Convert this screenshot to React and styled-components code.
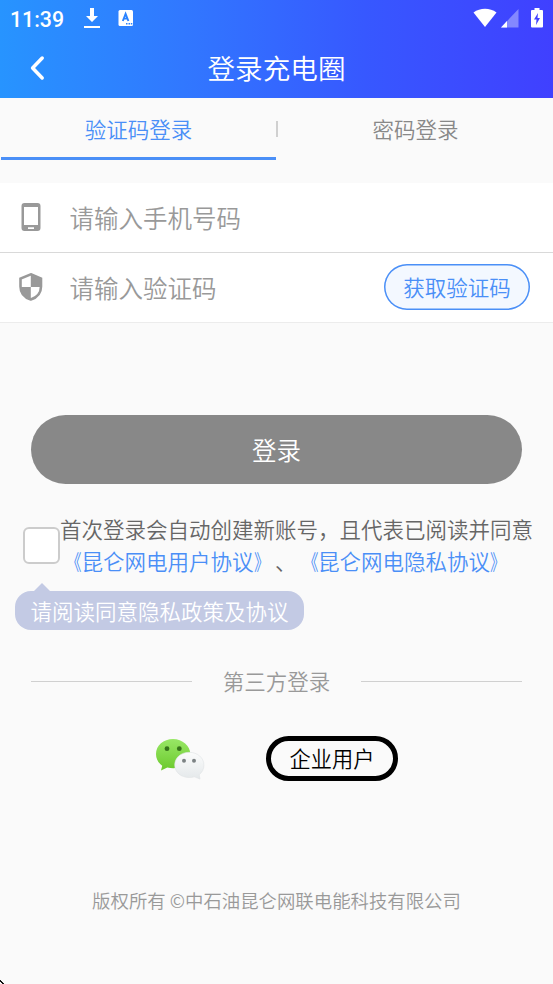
import React from "react";
import styled, { createGlobalStyle } from "styled-components";

const Global = createGlobalStyle`
  * { box-sizing: border-box; }
  html, body { margin: 0; background: #fafafa; }
  body { font-family: "Noto Sans CJK SC", sans-serif; font-size: 21.5px; font-weight: 350; color: #666; overflow: hidden; text-spacing-trim: space-all; }
  button, input { font-family: inherit; font-weight: inherit; }
`;

const Screen = styled.div`
  width: 553px;
  height: 984px;
  display: flex;
  flex-direction: column;
  background: #fafafa;
  white-space: nowrap;
`;

const Header = styled.header`
  height: 98px;
  flex: none;
  background: linear-gradient(90deg, #2794ff 0%, #3178ff 33%, #3758ff 66%, #4040ff 100%);
  color: #fff;
`;

const StatusBar = styled.div`
  height: 37px;
  display: flex;
  align-items: center;
  padding: 0 9px 1px 10px;
`;

const Clock = styled.span`
  width: 73px;
  padding-top: 3px;
  font: 500 21.3px/24px Roboto, sans-serif;
`;

const StatusIcon = styled.svg`
  display: block;
  flex: none;
  margin-left: ${(p) => p.$gap || 0}px;
`;

const StatusRight = styled.div`
  display: flex;
  margin-left: auto;
`;

const TitleBar = styled.div`
  height: 61px;
  display: grid;
  grid-template-columns: 76px 1fr 76px;
  align-items: center;
`;

const BackButton = styled.button`
  display: flex;
  padding: 0 0 0 29px;
  border: 0;
  background: none;
`;

const Title = styled.h1`
  margin: 0;
  padding-bottom: 2px;
  font-size: 27.6px;
  line-height: 40px;
  font-weight: 350;
  text-align: center;
`;

const Tabs = styled.nav`
  height: 62px;
  flex: none;
  display: flex;
`;

const Tab = styled.button`
  flex: 1;
  padding: 1px 0 0;
  border: 0;
  border-bottom: 3px solid ${(p) => (p.$active ? "#4a8ff7" : "transparent")};
  background: none;
  color: ${(p) => (p.$active ? "#4a8ff7" : "#888")};
  font-size: 21.5px;
  margin-left: ${(p) => (p.$active ? 1 : 0)}px;
`;

const TabDivider = styled.span`
  width: 2px;
  height: 16px;
  margin-top: 23px;
  background: #d0d0d0;
`;

const Form = styled.section`
  margin-top: 23px;
  background: #fff;
  border-bottom: 1px solid #ececec;
`;

const Field = styled.label`
  height: ${(p) => p.$height}px;
  display: flex;
  align-items: center;
  padding: 0 23px 1px 18px;
  border-bottom: ${(p) => (p.$line ? "1px solid #d9d9d9" : "0")};
`;

const FieldIcon = styled.svg`
  width: 26px;
  height: 30px;
  flex: none;
`;

const Input = styled.input`
  flex: 1;
  min-width: 0;
  height: 40px;
  margin-left: 25.5px;
  padding: 0;
  border: 0;
  outline: 0;
  background: none;
  font-size: 24.5px;
  &::placeholder { color: #999; opacity: 1; }
`;

const CodeButton = styled.button`
  width: 146px;
  height: 46px;
  padding: 0;
  border: 0;
  border-radius: 23px;
  box-shadow: inset 0 0 0 1.5px #4a8ff7;
  background: #f3f8ff;
  color: #4a8ff7;
  font-size: 21.5px;
  line-height: 44px;
`;

const LoginButton = styled.button`
  height: 69px;
  flex: none;
  margin: 92px 31px 0;
  padding: 0;
  border: 0;
  border-radius: 35px;
  background: #888;
  color: #fff;
  font-size: 24.5px;
`;

const Agreement = styled.div`
  display: flex;
  margin: 29px 0 0 23px;
`;

const Checkbox = styled.span`
  width: 37px;
  height: 37px;
  flex: none;
  margin-top: 14px;
  border: 2px solid #ccc;
  border-radius: 6px;
  background: #fff;
`;

const AgreementText = styled.p`
  margin: 0;
  line-height: 32px;
`;

const Link = styled.a`
  color: #4a8ff7;
`;

const Bracket = styled.span`
  display: inline-block;
  transform: scaleX(0.72);
  transform-origin: ${(p) => (p.$open ? "right" : "left")} center;
`;

const Hint = styled.div`
  align-self: flex-start;
  display: flex;
  flex-direction: column;
  margin: 6px 0 0 15px;
`;

const HintArrow = styled.span`
  width: 0;
  height: 0;
  margin-left: 19px;
  border: solid transparent;
  border-width: 0 8px 8px;
  border-bottom-color: #c3cae4;
`;

const HintBody = styled.div`
  width: 289px;
  height: 39px;
  border-radius: 16px;
  background: #c3cae4;
  color: #fff;
  line-height: 39px;
  text-align: center;
`;

const ThirdParty = styled.div`
  display: flex;
  align-items: center;
  gap: 31px;
  height: 32px;
  margin: 35px 31px 0;
  color: #999;
  line-height: 30px;
`;

const Rule = styled.span`
  flex: 1;
  height: 1px;
  background: #d0d0d0;
`;

const Providers = styled.div`
  display: flex;
  align-items: center;
  gap: 61px;
  height: 46px;
  margin: 38px 0 0 153px;
`;

const EnterpriseButton = styled.button`
  width: 132px;
  height: 45px;
  padding: 0;
  border: 5px solid #000;
  border-radius: 23px;
  background: #fafafa;
  color: #000;
  font-size: 21.2px;
  line-height: 34px;
`;

const Copyright = styled.footer`
  margin-top: 105px;
  color: #999;
  font-size: 18.4px;
  line-height: 28px;
  text-align: center;
`;

const CornerMark = styled.svg`
  display: block;
  margin-top: auto;
`;

function WeChat() {
  return (
    <svg width="52" height="44" viewBox="0 0 52 44">
      <defs>
        <linearGradient id="green" x2="0" y2="1">
          <stop stopColor="#98e766" />
          <stop offset="1" stopColor="#6bc92c" />
        </linearGradient>
        <linearGradient id="silver" x2="0" y2="1">
          <stop stopColor="#fbfcfc" />
          <stop offset="1" stopColor="#e4e8ea" />
        </linearGradient>
      </defs>
      <path d="M20 3C10.500 3 3 9.500 3 18c0 5 2.500 9 6.200 11.800L8 34.400l6.300-3c2 .5 3.900.8 6 .8C30 32.200 37.300 26 37.300 18S29.500 3 20 3z" fill="url(#green)" />
      <path d="M36.200 16.300C28 16.300 21.700 21.800 21.700 29S28 41.500 36.200 41.500c1.900 0 3.700-.2 5.300-.7l5.500 2.300-.8-4.400c3-2.300 4.700-5.700 4.700-9.700 0-7.200-6.500-12.700-14.700-12.700z" fill="url(#silver)" stroke="#dfe3e4" strokeWidth=".6" />
      <circle cx="14" cy="12.700" r="2.400" fill="#36751a" />
      <circle cx="26.300" cy="12.700" r="2.400" fill="#36751a" />
      <circle cx="31" cy="24.800" r="2" fill="#7c8284" />
      <circle cx="41" cy="24.800" r="2" fill="#7c8284" />
    </svg>
  );
}

function AgreementLink({ children }) {
  return (
    <Link>
      <Bracket $open>《</Bracket>
      {children}
      <Bracket>》</Bracket>
    </Link>
  );
}

export default function App() {
  return (
    <>
      <Global />
      <Screen>
        <Header>
          <StatusBar>
            <Clock>11:39</Clock>
            <StatusIcon width="18" height="22" viewBox="0 0 18 22" fill="#fff">
              <path d="M7 1h4v8h4l-6 6-6-6h4zM1 19h16v2H1z" />
            </StatusIcon>
            <StatusIcon $gap={17} width="16" height="18" viewBox="0 0 16 18">
              <rect x=".5" y="1" width="14.500" height="16" rx="1.500" fill="#fff" />
              <path d="M4.800 12 7.600 4.800 10.400 12M5.700 9.600h3.800" fill="none" stroke="#2b83ff" strokeWidth="1.900" />
              <path d="M8 14h1.500v1.500H8zM10.500 14H12v1.500h-1.500zM12.800 14h1.500v1.500h-1.500z" fill="#2b83ff" />
            </StatusIcon>
            <StatusRight>
              <StatusIcon width="24" height="20" viewBox="0 0 24 20" fill="#fff">
                <path d="M.5 4.500C7.200-.5 16.800-.5 23.500 4.500L12 19z" />
              </StatusIcon>
              <StatusIcon $gap={4} width="18" height="20" viewBox="0 0 18 20" fill="#fff">
                <path d="M17.500 1v18.500H0z" opacity=".36" />
                <path d="M6 13v6.500H0z" />
              </StatusIcon>
              <StatusIcon $gap={11} width="14" height="20" viewBox="0 0 14 20">
                <path d="M4.500 0h5v2H12q1 0 1 1v15.500q0 1-1 1H2q-1 0-1-1V3q0-1 1-1h2.500z" fill="#fff" />
                <path d="M8 5 4 11.500h2.500L6 17l4-7H7.500z" fill="#4242ff" />
              </StatusIcon>
            </StatusRight>
          </StatusBar>
          <TitleBar>
            <BackButton aria-label="返回">
              <svg width="17" height="26" viewBox="0 0 17 26" fill="none" stroke="#fff" strokeWidth="3.500" strokeLinecap="round" strokeLinejoin="round">
                <path d="M13.200 3 3.600 13l9.600 10" />
              </svg>
            </BackButton>
            <Title>登录充电圈</Title>
          </TitleBar>
        </Header>

        <Tabs>
          <Tab $active>验证码登录</Tab>
          <TabDivider />
          <Tab>密码登录</Tab>
        </Tabs>

        <Form>
          <Field $height={70} $line>
            <FieldIcon viewBox="0 0 26 30">
              <path fillRule="evenodd" fill="#999" d="M6.500 1h13q3 0 3 3v22q0 3-3 3h-13q-3 0-3-3V4q0-3 3-3zM6 5v18h14V5zM10 25.200v1.800h6v-1.800z" />
            </FieldIcon>
            <Input placeholder="请输入手机号码" />
          </Field>
          <Field $height={69}>
            <FieldIcon viewBox="0 0 26 30">
              <path d="M12.800 2.300 23 6.500v8C23 21 19 25.500 12.800 27.500 6.500 25.500 2.500 21 2.500 14.500v-8z" fill="#fff" stroke="#999" strokeWidth="2.600" />
              <path d="M12.800 2v13H24V6.500zM2 15h10.800v13C6 26 2 21 2 15z" fill="#999" />
            </FieldIcon>
            <Input placeholder="请输入验证码" />
            <CodeButton>获取验证码</CodeButton>
          </Field>
        </Form>

        <LoginButton>登录</LoginButton>

        <Agreement>
          <Checkbox role="checkbox" aria-checked="false" />
          <AgreementText>
            首次登录会自动创建新账号，且代表已阅读并同意
            <br />
            <AgreementLink>昆仑网电用户协议</AgreementLink>、<AgreementLink>昆仑网电隐私协议</AgreementLink>
          </AgreementText>
        </Agreement>

        <Hint>
          <HintArrow />
          <HintBody>请阅读同意隐私政策及协议</HintBody>
        </Hint>

        <ThirdParty>
          <Rule />
          第三方登录
          <Rule />
        </ThirdParty>

        <Providers>
          <WeChat />
          <EnterpriseButton>企业用户</EnterpriseButton>
        </Providers>

        <Copyright>版权所有 ©中石油昆仑网联电能科技有限公司</Copyright>
        <CornerMark width="4" height="4" viewBox="0 0 4 4">
          <path d="M0 0h1v1h1v1h1v1h1v1H2V3H1V2H0z" fill="#111" />
        </CornerMark>
      </Screen>
    </>
  );
}
